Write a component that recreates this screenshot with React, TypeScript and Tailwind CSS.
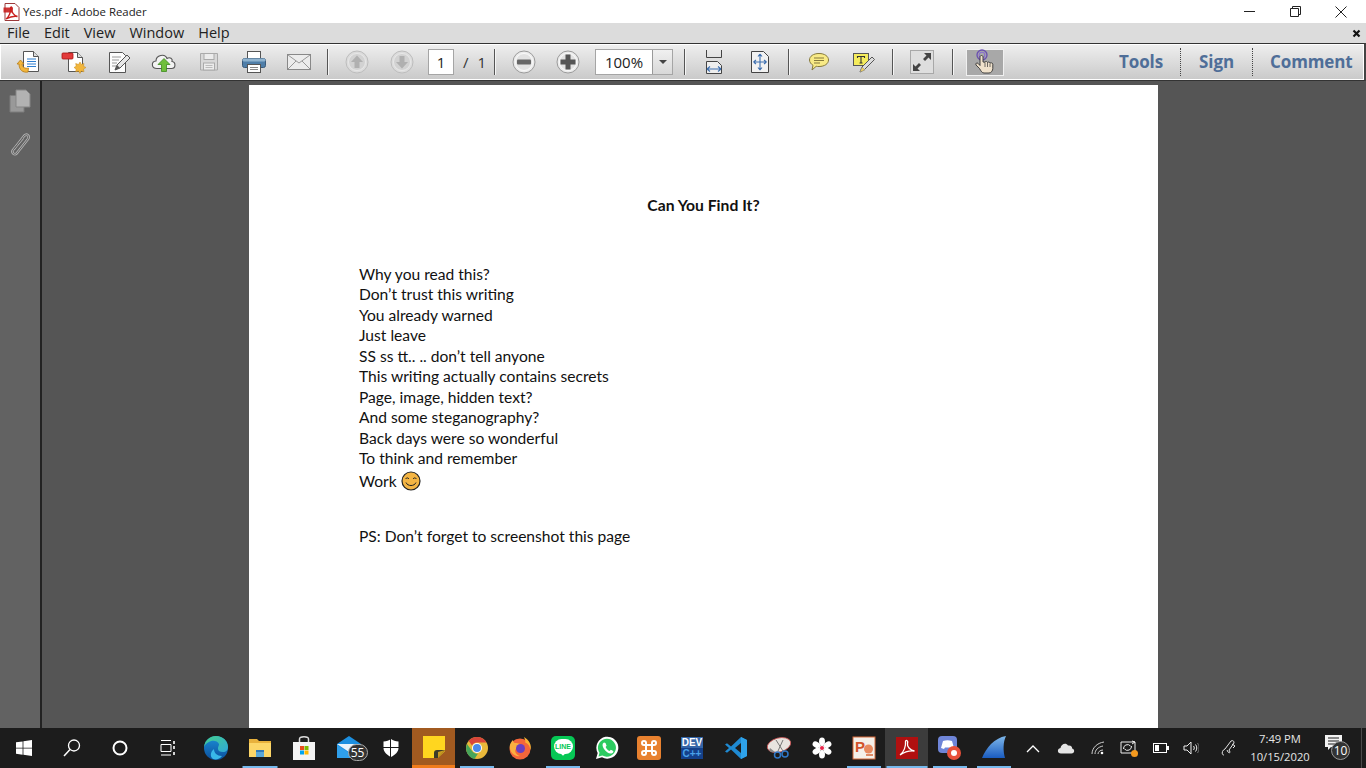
import React from "react";

const S = ({ w = 24, h = 24, children }: { w?: number; h?: number; children: React.ReactNode }) => (
  <svg width={w} height={h} viewBox={`0 0 ${w} ${h}`} fill="none" className="block shrink-0">{children}</svg>
);

const PdfMini = () => (
  <S w={20} h={20}>
    <path d="M3 1.500h10l4 4v13H3z" fill="#fff" stroke="#9b3a3a" />
    <path d="M1.500 5.500h9v5h-9z" fill="#c9201f" opacity="0.9" />
    <path d="M4 17c3-2 5-7 4.600-10.500C8.300 4 11 5 10 8c-.6 2 2 5.500 5.500 6.500-3-.5-7 0-11.500 2.500z" stroke="#c9201f" strokeWidth="1.400" fill="none" />
  </S>
);

const OpenIco = () => (
  <S w={26} h={26}>
    <path d="M7.500 2.500h10l5 5v15h-15z" fill="#fff" stroke="#555" />
    <path d="M17.500 2.500v5h5" fill="#ddd" stroke="#555" />
    <path d="M11 10h9M11 12.500h9M11 15h9M11 17.500h9" stroke="#2f7fd0" strokeWidth="1.200" />
    <path d="M12 23c-5 1-9-2-9-8l-2 0 3.500-4 3.500 4-2 0c0 3 3 5 6.500 4z" fill="#f2b63c" stroke="#b87d1a" strokeWidth="0.800" />
  </S>
);
const CreateIco = () => (
  <S w={26} h={26}>
    <path d="M7.500 3.500h9l5 5v14h-14z" fill="#fff" stroke="#555" />
    <path d="M16.500 3.500v5h5" fill="#ddd" stroke="#555" />
    <rect x="1" y="4" width="11" height="6" rx="1" fill="#e23a3a" stroke="#a11" strokeWidth="0.800" />
    <path d="M19 13l1.500 2.500 2.500-1-.5 2.800 2.500 1.200-2.500 1.500.5 2.800-2.800-.8-1.200 2.500-1.500-2.500-2.800.8.500-2.800-2.200-1.500 2.200-1.200-.5-2.800 2.800 1z" fill="#f2b63c" stroke="#c48a1c" strokeWidth="0.500" />
  </S>
);
const EditIco = () => (
  <S w={26} h={26}>
    <path d="M3.500 3.500h13l3 3v17h-16z" fill="#fdfdfd" stroke="#555" />
    <path d="M6 8h9M6 11h7M6 14h5M6 17h4" stroke="#999" />
    <path d="M9 21l2-5L21 6l3 3-10 10z" fill="#e8e8e8" stroke="#555" />
    <path d="M9 21l2-5 3 3z" fill="#555" />
  </S>
);
const CloudIco = () => (
  <S w={26} h={26}>
    <path d="M6 19.500c-6 0-6-7-1-7.500 0-6 9-8 11-2.500 3-2 6 .5 5 3 4 .5 4 7-.5 7z" fill="#f3f3f3" stroke="#555" strokeWidth="1.100" />
    <path d="M13 9.500l6 6h-3.500v7h-5v-7H7z" fill="#6fbf3b" stroke="#3c8a1e" strokeWidth="0.800" />
  </S>
);
const SaveIco = () => (
  <S w={24} h={24}>
    <path d="M3.500 3.500h17v16.500h-17z" fill="#d8d8d8" stroke="#aaa" />
    <rect x="7" y="3.500" width="10" height="6" fill="#ececec" stroke="#aaa" />
    <rect x="6.500" y="13" width="11" height="7" fill="#ececec" stroke="#aaa" />
    <path d="M8.500 15.500h7M8.500 17.500h7" stroke="#bbb" />
  </S>
);
const PrintIco = () => (
  <S w={26} h={26}>
    <rect x="6.500" y="2.500" width="13" height="8" fill="#fff" stroke="#555" />
    <rect x="1.500" y="9.500" width="23" height="9" rx="2" fill="#4f7ea8" stroke="#3a5a7a" />
    <rect x="1.500" y="9.500" width="23" height="3" rx="1.500" fill="#8fb3cf" />
    <rect x="6.500" y="15.500" width="13" height="8" fill="#fff" stroke="#555" />
    <path d="M9 18.500h8M9 20.500h8" stroke="#888" />
  </S>
);
const MailIco = () => (
  <S w={26} h={26}>
    <rect x="1.500" y="5.500" width="23" height="15" fill="#ececec" stroke="#888" />
    <path d="M2 6l11 8 11-8M2 20l8-8M24 20l-8-8" stroke="#999" />
  </S>
);
const NavIco = ({ d }: { d: string }) => (
  <S w={24} h={24}>
    <circle cx="12" cy="12" r="11" fill="#dcdcdc" stroke="#bdbdbd" />
    <circle cx="12" cy="12" r="8.500" fill="#d2d2d2" stroke="#e8e8e8" />
    <path d={d} fill="#b0b0b0" />
  </S>
);
const ZoomIco = ({ plus }: { plus?: boolean }) => (
  <S w={24} h={24}>
    <circle cx="12" cy="12" r="11" fill="#ececec" stroke="#9a9a9a" />
    <circle cx="12" cy="12" r="8.500" fill="#e2e2e2" stroke="#fafafa" />
    {plus ? <path d="M9.500 4.500h5v5h5v5h-5v5h-5v-5h-5v-5h5z" fill="#555" /> : <rect x="5" y="9.500" width="14" height="5" rx="1" fill="#666" />}
  </S>
);
const FitW = () => (
  <S w={20} h={26}>
    <path d="M2.500 1v7.500h15V1" stroke="#444" />
    <path d="M2.500 12.500h11l4 4v8h-15z" fill="#eee" stroke="#444" />
    <path d="M3 20h14M3 20l3-2.500M3 20l3 2.500M17 20l-3-2.500M17 20l-3 2.500" stroke="#3d6fb0" strokeWidth="1.100" />
  </S>
);
const FitP = () => (
  <S w={20} h={24}>
    <path d="M1.500 1.500h12l5 5v16h-17z" fill="#f2f2f2" stroke="#444" />
    <path d="M10 4v16M3.500 12h13M10 4l-2 2.500M10 4l2 2.500M10 20l-2-2.500M10 20l2-2.500M3.500 12l2.500-2M3.500 12l2.500 2M16.500 12l-2.500-2M16.500 12l-2.500 2" stroke="#3d6fb0" strokeWidth="1.100" />
  </S>
);
const Bubble = () => (
  <S w={22} h={20}>
    <path d="M11 1.500c5.500 0 9.500 2.700 9.500 6.500s-4 6.500-9.500 6.500c-1 0-2 0-2.800-.2L4 18l1-4.700C3 12 1.500 10.200 1.500 8 1.500 4.200 5.500 1.500 11 1.500z" fill="#f8ea86" stroke="#85793c" />
    <path d="M6 6h10M6 8.500h10M6 11h6" stroke="#85793c" />
  </S>
);
const Highlight = () => (
  <S w={24} h={24}>
    <rect x="1.500" y="3.500" width="15" height="12" fill="#f5ec5c" stroke="#555" />
    <path d="M5.500 8V6.500h7V8M9 6.500v6.500M7.500 13h3" stroke="#333" strokeWidth="1.100" />
    <path d="M8 22l2-5 10-10 2.500 2.500-10 10z" fill="#ddd" stroke="#555" />
    <path d="M8 22l2-5 3 3z" fill="#f0d060" stroke="#888" strokeWidth="0.500" />
  </S>
);
const FullIco = () => (
  <div className="w-[24px] h-[24px] bg-[#dedede] border border-[#a8a8a8] flex items-center justify-center">
    <S w={22} h={22}>
      <path d="M13 2h7v7l-2.500-2.500-3.500 3.500-2-2 3.500-3.500z" fill="#444" />
      <path d="M9 20H2v-7l2.500 2.500L8 12l2 2-3.500 3.500z" fill="#444" />
    </S>
  </div>
);
const HandIco = () => (
  <S w={24} h={26}>
    <circle cx="9" cy="6" r="5" stroke="#6a4fb0" strokeWidth="1.300" fill="none" />
    <circle cx="9" cy="6" r="2.800" stroke="#8a70d0" strokeWidth="1.100" fill="none" />
    <path d="M7 8c0-2 3-2 3 0v5l2 .2c0-1 2.500-1 2.500.3.300-.8 2.500-.6 2.500.7.500-.7 2.800-.5 2.800 1v4.300c0 2-1.500 4.500-3.800 4.500H11c-2 0-3-2-4.500-4.500L3 16c-1-1.500 1-2.800 2.200-1.500L7 16.500z" fill="#f0e2cc" stroke="#333" strokeWidth="0.900" />
    <path d="M12 13.500V18M14.500 14v4M17 14.500V18" stroke="#333" strokeWidth="0.700" />
  </S>
);

const Sep = ({ ml = 0, mr = 0 }: { ml?: number; mr?: number }) => (
  <div style={{ marginLeft: ml, marginRight: mr }} className="w-[2px] h-[26px] bg-[linear-gradient(90deg,#555_50%,#f5f5f5_50%)] shrink-0" />
);
const Slot = ({ w = 45, children }: { w?: number; children: React.ReactNode }) => (
  <div style={{ width: w }} className="flex items-center justify-center shrink-0">{children}</div>
);

const Toolbar = () => (
  <div className="h-[38px] shrink-0 flex items-center border-y border-[#333] border-r-2 border-r-[#444] bg-[linear-gradient(#efefef,#c9c9c9)] shadow-[inset_1px_1px_0_#fff,inset_-1px_-1px_0_#fff] pl-[6px] font-['Open_Sans',sans-serif]">
    <Slot><OpenIco /></Slot>
    <Slot><CreateIco /></Slot>
    <Slot><EditIco /></Slot>
    <Slot><CloudIco /></Slot>
    <Slot><SaveIco /></Slot>
    <Slot><PrintIco /></Slot>
    <Slot><MailIco /></Slot>
    <Sep ml={6} mr={5} />
    <Slot><NavIco d="M12 5.500l6 6.500h-3.500v6h-5v-6H6z" /></Slot>
    <Slot><NavIco d="M12 18.500L6 12h3.500V6h5v6H18z" /></Slot>
    <div className="ml-[4px] w-[26px] h-[26px] bg-white border border-[#a5a5a5] flex items-center justify-center text-[15px] text-[#222]">1</div>
    <div className="w-[40px] pl-[9px] pr-[8px] flex justify-between text-[15px] text-[#333]"><span>/</span><span>1</span></div>
    <Sep mr={5} />
    <Slot w={45}><ZoomIco /></Slot>
    <Slot w={44}><ZoomIco plus /></Slot>
    <div className="ml-[5px] w-[78px] h-[26px] flex bg-white border border-[#a5a5a5] text-[15px] text-[#222]">
      <div className="w-[56px] flex items-center justify-center">100%</div>
      <div className="flex-1 border-l border-[#999] bg-[linear-gradient(#f0f0f0,#d8d8d8)] flex items-center justify-center">
        <div className="w-0 h-0 border-x-[4px] border-x-transparent border-t-[4px] border-t-[#444]" />
      </div>
    </div>
    <Sep ml={11} mr={6} />
    <Slot w={44}><FitW /></Slot>
    <Slot w={47}><FitP /></Slot>
    <Sep ml={5} mr={6} />
    <Slot w={45}><Bubble /></Slot>
    <Slot w={45}><Highlight /></Slot>
    <Sep ml={6} mr={5} />
    <Slot w={46}><FullIco /></Slot>
    <Sep ml={7} mr={12} />
    <div className="w-[38px] h-[27px] bg-[#a8a8a8] border border-[#f0f0f0] flex items-center justify-center"><HandIco /></div>
    <div className="ml-auto flex items-center h-full text-[17px] font-bold text-[#4f6e98] tracking-[-0.1px]">
      <span className="w-[44px] text-center">Tools</span>
      <div className="mx-[17px] h-[28px] border-l border-dotted border-[#444]" />
      <span className="w-[37px] text-center">Sign</span>
      <div className="mx-[17px] h-[28px] border-l border-dotted border-[#444]" />
      <span className="w-[82px] text-center mr-[12px]">Comment</span>
    </div>
  </div>
);

const lines = [
  "Why you read this?",
  "Don’t trust this writing",
  "You already warned",
  "Just leave",
  "SS ss tt.. .. don’t tell anyone",
  "This writing actually contains secrets",
  "Page, image, hidden text?",
  "And some steganography?",
  "Back days were so wonderful",
  "To think and remember",
];

const Smile = () => (
  <S w={20} h={20}>
    <circle cx="10" cy="10" r="9" fill="#f4b544" stroke="#222" strokeWidth="1.200" />
    <path d="M4.500 8c1-1.500 2.500-1.500 3.500 0M12 8c1-1.500 2.500-1.500 3.500 0" stroke="#222" />
    <path d="M5 11.500c1.500 4 8.500 4 10 0" stroke="#222" />
  </S>
);

const PdfPage = () => (
  <div className="ml-[207px] mt-[4px] w-[909px] h-[643px] bg-white pl-[110px] pt-[110px] text-[#111] font-['Lato',sans-serif] text-[15.6px] overflow-hidden">
    <div className="-ml-[110px] text-center font-bold text-[15.7px] leading-[20px]">Can You Find It?</div>
    <div className="mt-[48.5px] leading-[20.5px]">
      {lines.map((l) => <div key={l}>{l}</div>)}
      <div className="flex items-center gap-[4px] h-[24px] mt-[0.5px]">Work <Smile /></div>
    </div>
    <div className="mt-[33px] leading-[20.5px]">PS: Don’t forget to screenshot this page</div>
  </div>
);

/* ---------- taskbar icons ---------- */
const Win = () => (
  <S w={16} h={16}><path d="M0 2.300l6.600-.9v6.300H0zM7.400 1.300L16 0v7.700H7.400zM0 8.400h6.600v6.300L0 13.800zM7.400 8.400H16V16l-8.600-1.200z" fill="#fff" /></S>
);
const Search = () => (
  <S w={18} h={18}><circle cx="11" cy="6.500" r="5.500" stroke="#fff" strokeWidth="1.300" /><path d="M7 10.500L1 17" stroke="#fff" strokeWidth="1.500" /></S>
);
const Cortana = () => (
  <S w={16} h={16}><circle cx="8" cy="8" r="6.500" stroke="#fff" strokeWidth="2" /></S>
);
const TaskView = () => (
  <S w={18} h={16}><path d="M2 .5h10M2 15h10M2 4.500h10v7H2z" stroke="#fff" /><path d="M15 1v3M15 6v3M15 12v3" stroke="#fff" strokeWidth="1.600" /></S>
);
const Edge = () => (
  <S w={26} h={26}>
    <defs>
      <linearGradient id="eg1" x1="0" y1="0" x2="1" y2="1"><stop offset="0" stopColor="#45d08c" /><stop offset="1" stopColor="#2fa8d8" /></linearGradient>
      <linearGradient id="eg2" x1="0" y1="0" x2="0" y2="1"><stop offset="0" stopColor="#1b8fd8" /><stop offset="1" stopColor="#0c4f9c" /></linearGradient>
    </defs>
    <circle cx="13" cy="13" r="12" fill="url(#eg2)" />
    <path d="M1 12C2 5 7 1 13 1c7 0 12 5 12 11 0 3-2 5-5 5-3 0-5-1-5-3 0-3 1-3 1-5-2-4-7-4-10-2-3 1-4 3-5 5z" fill="url(#eg1)" />
    <path d="M11 14c0 4 3 7 8 7-2 3-6 4-9 3-3-2-3-7 1-10z" fill="#38b7e8" />
  </S>
);
const Folder = () => (
  <S w={24} h={22}>
    <path d="M1 2h8l2 2h12v16H1z" fill="#e8b13c" />
    <path d="M1 6h22v14H1z" fill="#fcd668" />
    <rect x="8" y="13" width="8" height="7" fill="#5aa7d8" />
    <rect x="8" y="13" width="8" height="2" fill="#2f78b8" />
  </S>
);
const Store = () => (
  <S w={24} h={26}>
    <path d="M7.500 8V4c0-3 9-3 9 0v4" stroke="#ddd" strokeWidth="1.500" />
    <rect x="1" y="7" width="22" height="18" fill="#f3f3f3" />
    <rect x="8" y="11" width="4" height="4" fill="#e74c1c" /><rect x="12.500" y="11" width="4" height="4" fill="#7fba00" />
    <rect x="8" y="15.500" width="4" height="4" fill="#00a4ef" /><rect x="12.500" y="15.500" width="4" height="4" fill="#ffb900" />
  </S>
);
const Mail = () => (
  <div className="relative w-[34px] h-[26px] ml-[11px] shrink-0">
    <S w={26} h={24}>
      <path d="M1 9L13 1l12 8v14H1z" fill="#1c8fe0" />
      <path d="M1 9l12 8 12-8" fill="#eaf4fb" />
      <path d="M1 23V10l12 8 12-8v13z" fill="#2f9feb" />
    </S>
    <div className="absolute left-[12px] top-[9px] w-[20px] h-[17px] rounded-full bg-[#333] border border-[#aaa] text-white text-[12px] leading-[15px] text-center">55</div>
  </div>
);
const Shield = () => (
  <S w={16} h={20}><path d="M8 1c2 1.500 4.500 2.500 7.500 2.500V10c0 4-3.500 7-7.500 9-4-2-7.500-5-7.500-9V3.500C3.500 3.500 6 2.500 8 1z" fill="#fff" /><path d="M7.500 1v18M0 9.500h16" stroke="#1c1c1c" /></S>
);
const Sticky = () => (
  <S w={22} h={22}><path d="M0 0h22v15l-7 7H0z" fill="#ffd61f" /><path d="M11 22v-5c0-2 1-3 3-3h8l-7 8z" fill="#3c3c28" /><path d="M22 14l-7 8v-6z" fill="#c89a20" /></S>
);
const Chrome = () => (
  <S w={24} h={24}>
    <circle cx="12" cy="12" r="11" fill="#e8b83a" />
    <path d="M12 1a11 11 0 0 1 9.500 5.500H12A5.500 5.500 0 0 0 7 9.500L3.500 4.800A11 11 0 0 1 12 1z" fill="#d9453a" />
    <path d="M2 8l5.200 7.200a5.500 5.500 0 0 0 5.800 2.300L9.500 23A11 11 0 0 1 2 8z" fill="#47a55a" />
    <circle cx="12" cy="12" r="5" fill="#fff" /><circle cx="12" cy="12" r="4" fill="#4a8ae8" />
  </S>
);
const Firefox = () => (
  <S w={24} h={24}>
    <circle cx="12" cy="13" r="10.500" fill="#f4663a" />
    <path d="M16 1c5 3 8 8 6.500 13-1-5-3-7-5-7C17.500 5 17 3 16 1z" fill="#f9b233" />
    <path d="M2 13C1 9 3 6 5 4c0 2 1 3 2 3 3 0 7 1 8 4-2 1-5 0-7 2-2 2 0 6 4 7-5 1-9-3-10-7z" fill="#fbb040" />
    <circle cx="12.500" cy="12.500" r="4.500" fill="#6a3fc0" />
  </S>
);
const Line = () => (
  <div className="w-[24px] h-[24px] rounded-[5px] bg-[#06c755] flex items-center justify-center relative">
    <div className="w-[19px] h-[15px] -mt-[3px] rounded-[9px] bg-white text-[#06c755] text-[7px] font-bold leading-[15px] text-center font-['Liberation_Sans',sans-serif]">LINE</div>
    <div className="absolute left-[10px] top-[15px] w-[4px] h-[4px] bg-white rotate-45" />
  </div>
);
const Whats = () => (
  <S w={24} h={24}>
    <path d="M1 23l1.700-6A11 11 0 1 1 7 21.300z" fill="#fff" />
    <path d="M3.500 20.500l1-3.700A9 9 0 1 1 7.400 19.500z" fill="#2ccb60" />
    <path d="M9 6.500c-2 1-2 3.500 0 6.500s5 5 7.500 4.500c1.500-.3 2-1.800 1.800-2.500l-2.500-1.300-1.200 1.300c-1.500-.5-3.300-2.300-4-4l1-1.200-1.100-2.800z" fill="#fff" />
  </S>
);
const Xampp = () => (
  <div className="w-[24px] h-[24px] rounded-[3px] bg-[#e8812f] flex items-center justify-center">
    <S w={18} h={18}><path d="M6 6H4a2 2 0 1 1 2-2v2m0 0h6m0 0V4a2 2 0 1 1 2 2h-2m0 0v6m0 0h2a2 2 0 1 1-2 2v-2m0 0H6m0 0v2a2 2 0 1 1-2-2h2m0 0V6" stroke="#fff" strokeWidth="2" /></S>
  </div>
);
const Dev = () => (
  <div className="w-[22px] h-[22px] flex flex-col font-['Liberation_Sans',sans-serif] font-bold text-[10px] leading-[11px] text-center">
    <div className="h-[11px] bg-[#3566a8] text-white">DEV</div>
    <div className="h-[11px] bg-[#14408a] text-[#4aa0e8]">C++</div>
  </div>
);
const VSCode = () => (
  <S w={24} h={24}>
    <path d="M17 1l6 3v16l-6 3L7 13.500 3 16.800 1 15.500 5 12 1 8.500l2-1.300 4 3.300z" fill="#1f8ad2" />
    <path d="M17 1l6 3v16l-6 3z" fill="#2ea2ea" />
    <path d="M17 7l-6 5 6 5z" fill="#1c1c1c" />
  </S>
);
const Snip = () => (
  <S w={26} h={24}>
    <ellipse cx="13" cy="9" rx="12" ry="7" transform="rotate(-15 13 9)" fill="#e8e4e0" stroke="#c55" strokeWidth="0.800" />
    <path d="M4 12c-2 3 1 5 5 4" fill="#888" />
    <path d="M10 4l7 11M17 4l-5 11" stroke="#777" />
    <circle cx="11.500" cy="19" r="3" stroke="#2f78c8" strokeWidth="1.500" /><circle cx="19" cy="18" r="3" stroke="#2f78c8" strokeWidth="1.500" />
  </S>
);
const Flower = () => (
  <S w={22} h={22}>
    {[0, 60, 120, 180, 240, 300].map((a) => <ellipse key={a} cx="11" cy="4.500" rx="3" ry="4" fill="#fff" transform={`rotate(${a} 11 11)`} />)}
    <circle cx="11" cy="11" r="3" fill="#fff" /><circle cx="11" cy="11" r="2" fill="#e8254a" />
  </S>
);
const Ppt = () => (
  <S w={24} h={24}>
    <rect x="1" y="1" width="22" height="22" fill="#f4f0ea" stroke="#d86a3a" />
    <text x="3" y="16" fontFamily="Liberation Sans" fontWeight="700" fontSize="15" fill="#d2532a">P</text>
    <circle cx="16.500" cy="13" r="4.500" fill="#e88a60" />
    <path d="M14 19h7" stroke="#d86a3a" strokeWidth="1.500" />
  </S>
);
const Acro = () => (
  <S w={22} h={22}>
    <rect x="0" y="0" width="22" height="22" fill="#b01010" />
    <path d="M4 18c4-3 6-9 5.500-13-.3-2.500 3-2 2 1.500-.7 3 3 7 7 7.500-4-.5-9.500.5-14.500 4z" stroke="#fff" strokeWidth="1.300" />
  </S>
);
const Rec = () => (
  <div className="relative w-[24px] h-[24px]">
    <div className="w-[19px] h-[17px] rounded-[4px] bg-[#6f85d8] flex items-center justify-center">
      <S w={13} h={9}><path d="M2 1c3-1 6-1 9 0l2 7-3 1-1-1.500H4L3 9 0 8z" fill="#fff" /></S>
    </div>
    <div className="absolute left-[9px] top-[10px] w-[14px] h-[14px] rounded-full bg-[#e8503a] flex items-center justify-center">
      <div className="w-[6px] h-[6px] rounded-full bg-white" />
    </div>
  </div>
);
const Shark = () => (
  <S w={24} h={24}>
    <defs><linearGradient id="sk" x1="0" y1="0" x2="0" y2="1"><stop offset="0" stopColor="#7fb8ea" /><stop offset="1" stopColor="#1a5cc0" /></linearGradient></defs>
    <path d="M0 22C4 12 12 2 24 0c-3 6-3 15-1 22z" fill="url(#sk)" />
  </S>
);

const Chevron = () => <S w={14} h={9}><path d="M1 8l6-6 6 6" stroke="#fff" strokeWidth="1.300" /></S>;
const Cloud = () => <S w={18} h={12}><path d="M4 11.500c-4 0-4-5-.5-5.500C4 2 9 0 11 3.500c3-.5 4.500 1.500 4 3 3 .5 3 5-.5 5z" fill="#e4e4e4" /></S>;
const Wifi = () => (
  <S w={14} h={14}>
    <path d="M1 13C1 7 6 2 13 1M4 13c0-4 3-7 8-8M7 13c0-2 2-4 5-4" stroke="#cfcfcf" />
    <circle cx="11" cy="12" r="1.300" fill="#fff" />
  </S>
);
const Sync = () => (
  <div className="relative w-[18px] h-[17px]">
    <S w={16} h={14}><path d="M1 2h14v11H1z" stroke="#eee" /><path d="M3.500 9a4 4 0 0 1 7-3M11.500 6a4 4 0 0 1-7 3" stroke="#eee" /><path d="M12 1l3 1-3 2" stroke="#eee" /></S>
    <div className="absolute right-0 bottom-0 w-[7px] h-[7px] rounded-full bg-[#f59a1f]" />
  </div>
);
const Battery = () => <S w={16} h={10}><rect x="0.500" y="0.500" width="13" height="9" stroke="#fff" /><rect x="2" y="2" width="4" height="6" fill="#fff" /><rect x="14" y="3" width="2" height="4" fill="#fff" /></S>;
const Vol = () => (
  <S w={16} h={14}>
    <path d="M1 5h3l4-4v12L4 9H1z" stroke="#eee" />
    <path d="M10.500 5c1 1.200 1 2.800 0 4M12.500 3.500c1.700 2 1.700 5 0 7" stroke="#eee" /><path d="M14.500 2c2 3 2 7 0 10" stroke="#777" />
  </S>
);
const Pen = () => (
  <S w={16} h={18}>
    <path d="M3 16c-3 0-2-5 1-6l6-8c2-1 3 0 3 2l-5 7 1 2c0 1-1 1-2 0L6 11M11 5l3 2-2 2" stroke="#e4e4e4" fill="none" />
  </S>
);
const Notif = () => (
  <div className="relative w-[26px] h-[26px]">
    <S w={17} h={15}><path d="M0 0h17v12H6l-3 3v-3H0z" fill="#f2f2f2" /><path d="M3 3h11M3 6h11M3 9h8" stroke="#1c1c1c" /></S>
    <div className="absolute left-[6px] top-[6px] w-[19px] h-[19px] rounded-full bg-[#333] border border-[#999] text-white text-[12px] leading-[17px] text-center">10</div>
  </div>
);

type TI = { w: number; el: React.ReactNode; bar?: number; cls?: string };
const apps: TI[] = [
  { w: 48, el: <Win /> },
  { w: 48, el: <Search /> },
  { w: 48, el: <Cortana /> },
  { w: 48, el: <TaskView /> },
  { w: 2, el: null },
  { w: 44, el: <Edge /> },
  { w: 44, el: <Folder />, bar: 35 },
  { w: 43, el: <Store /> },
  { w: 44, el: <Mail /> },
  { w: 43, el: <Shield /> },
  { w: 43, el: <Sticky />, cls: "bg-[#a15a20] border-b-[3px] border-b-[#f07c1c]" },
  { w: 43, el: <Chrome />, bar: 34 },
  { w: 43, el: <Firefox /> },
  { w: 44, el: <Line />, bar: 34 },
  { w: 43, el: <Whats /> },
  { w: 42, el: <Xampp /> },
  { w: 44, el: <Dev /> },
  { w: 43, el: <VSCode /> },
  { w: 43, el: <Snip /> },
  { w: 43, el: <Flower /> },
  { w: 42, el: <Ppt />, bar: 34 },
  { w: 43, el: <Acro />, bar: 41, cls: "bg-[#3c3c3c]" },
  { w: 44, el: <Rec />, bar: 34 },
  { w: 43, el: <Shark />, bar: 34 },
];

const Taskbar = () => (
  <div className="h-[40px] shrink-0 bg-[#1c1c1c] flex items-stretch font-['Open_Sans',sans-serif]">
    {apps.map((a, i) => (
      <div key={i} style={{ width: a.w }} className={`relative flex items-center justify-center shrink-0 ${a.cls ?? ""}`}>
        {a.el}
        {a.bar && <div style={{ width: a.bar }} className="absolute bottom-0 left-1/2 -translate-x-1/2 h-[2px] bg-[#76b9ed]" />}
      </div>
    ))}
    <div className="ml-[2px] flex items-center">
      <Slot w={32}><Chevron /></Slot>
      <Slot w={33}><Cloud /></Slot>
      <Slot w={31}><Wifi /></Slot>
      <Slot w={32}><Sync /></Slot>
      <Slot w={31}><Battery /></Slot>
      <Slot w={30}><Vol /></Slot>
      <Slot w={46}><Pen /></Slot>
    </div>
    <div className="w-[56px] flex flex-col justify-center items-center text-[11.2px] leading-[18px] text-[#e6e6e6] whitespace-nowrap">
      <span>7:49 PM</span>
      <span>10/15/2020</span>
    </div>
    <div className="ml-[17px] flex items-center"><Notif /></div>
    <div className="ml-auto mr-[4px] w-px bg-[#4a4a4a]" />
  </div>
);

export default function App() {
  return (
    <div className="w-[1366px] h-[768px] overflow-hidden flex flex-col bg-[#555] font-['Open_Sans',sans-serif]">
      <div className="h-[23px] shrink-0 bg-white flex items-center text-[11.4px] text-[#222]">
        <div className="ml-[2px] mr-[1px]"><PdfMini /></div>
        <span>Yes.pdf - Adobe Reader</span>
        <div className="ml-auto flex items-center">
          <Slot w={46}><S w={11} h={11}><path d="M0 5.500h11" stroke="#222" /></S></Slot>
          <Slot w={46}><S w={11} h={11}><path d="M.5 2.500h8v8h-8zM2.500 2.500v-2h8v8h-2" stroke="#222" /></S></Slot>
          <Slot w={46}><S w={12} h={12}><path d="M.5.5l11 11M11.500.5l-11 11" stroke="#222" /></S></Slot>
          <div className="w-[2px]" />
        </div>
      </div>
      <div className="h-[20px] shrink-0 bg-[#dcdcdc] flex items-center text-[14.5px] text-[#222] pl-[7px] gap-[14px] relative leading-none">
        <span>File</span><span>Edit</span><span>View</span><span>Window</span><span>Help</span>
        <span className="ml-auto mr-[5px]"><S w={9} h={9}><path d="M1.500 1.500l6 6M7.500 1.500l-6 6" stroke="#111" strokeWidth="2.200" /></S></span>
      </div>
      <Toolbar />
      <div className="flex-1 flex min-h-0">
        <div className="w-[42px] shrink-0 bg-[#626262] border-r-2 border-r-[#222] flex flex-col items-center pt-[8px] gap-[19px]">
          <S w={22} h={24}>
            <path d="M1 6.500h14V23H1z" fill="#999" stroke="#7c7c7c" />
            <path d="M7 1h10l4 4v13H7z" fill="#b2b2b2" stroke="#858585" />
          </S>
          <S w={22} h={26}>
            <path d="M5 17L15 4c3-3 6 0 4 3L8 21c-2 3-6 0-4-3L14 6" stroke="#b0b0b0" strokeWidth="2.600" />
            <path d="M5 17L15 4c3-3 6 0 4 3L8 21c-2 3-6 0-4-3L14 6" stroke="#626262" strokeWidth="1" />
          </S>
        </div>
        <div className="flex-1 min-w-0 bg-[#555]"><PdfPage /></div>
      </div>
      <Taskbar />
    </div>
  );
}
